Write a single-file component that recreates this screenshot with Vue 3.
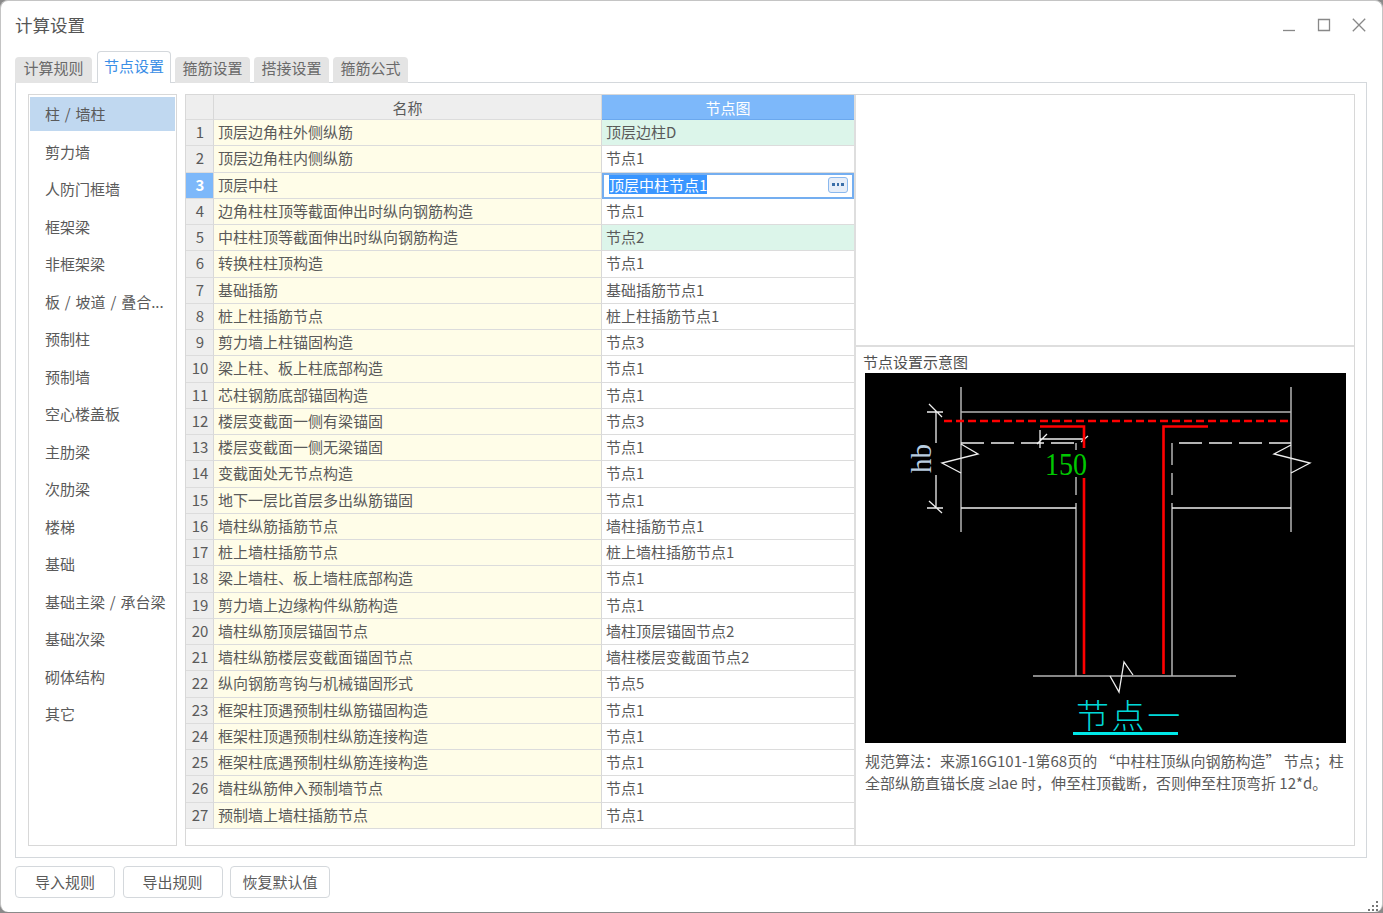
<template>
  <div class="window">
    <div class="titlebar">
      <span class="win-title">计算设置</span>
      <div class="win-btns">
        <svg width="14" height="14" viewBox="0 0 14 14"><path d="M1 12.5h12" /></svg>
        <svg width="14" height="14" viewBox="0 0 14 14"><path d="M1.5 1.5h11v11h-11z" /></svg>
        <svg width="14" height="14" viewBox="0 0 14 14"><path d="M.8.8l12.4 12.4M13.2.8L.8 13.2" /></svg>
      </div>
    </div>

    <div class="tabs">
      <div v-for="(t, i) in tabs" :key="t" class="tab" :class="{ active: i === 1 }">{{ t }}</div>
    </div>

    <div class="panel">
      <div class="sidebar">
        <div v-for="(s, i) in sideItems" :key="s" class="side-item" :class="{ active: i === 0 }">{{ s }}</div>
      </div>

      <div class="grid-wrap">
        <div class="table">
          <div class="row head">
            <div class="cell num"></div>
            <div class="cell title">名称</div>
            <div class="cell title node-head">节点图</div>
          </div>
          <div v-for="(r, i) in rows" :key="r[0]" class="row">
            <div class="cell num" :class="{ current: i === 2 }">{{ i + 1 }}</div>
            <div class="cell name">{{ r[0] }}</div>
            <div v-if="i === 2" class="cell editing">
              <span class="sel">{{ r[1] }}</span>
              <span class="more"><i></i><i></i><i></i></span>
            </div>
            <div v-else class="cell node" :class="{ changed: i === 0 || i === 4 }">{{ r[1] }}</div>
          </div>
        </div>

        <div class="side-pane">
          <div class="blank"></div>
          <div class="preview">
            <div class="preview-label">节点设置示意图</div>
            <svg class="drawing" width="481" height="370" viewBox="865 373 481 370">
              <rect x="865" y="373" width="481" height="370" fill="#000" />
              <g fill="none" stroke="#b4b4b4" stroke-width="1.5">
                <path d="M961 387V532M1291 387V532M961 412H1291" />
                <path d="M1076 443V450M1076 477V495M1172 443V465M1172 473V495" />
                <path d="M1076 503V676M1172 503V676M1033 676H1236" />
              </g>
              <g fill="none" stroke="#eee" stroke-width="1.3">
                <path d="M961 443H1076M1179 443H1291" stroke-dasharray="23 7" />
                <path d="M961 508H1076M1172 508H1291" />
                <path d="M936 412V443M936 475V508M927 412H943M929 404L942 417M927 508H943M929 501L942 513" />
                <path d="M1040 439H1085M1040 430V448M1047 434L1037 444M1088 436L1081 442" />
                <path d="M961 444L978 454L942 463L961 473M1291 445L1274 454L1310 463L1291 473" />
                <path d="M1110 676L1119 692L1124 662L1133 675" />
              </g>
              <g fill="none" stroke="#f00">
                <path d="M944 421H1291" stroke-width="2.6" stroke-dasharray="8 4" />
                <path d="M1040 426.5H1084V448M1084 478V674M1208 426.5H1163.5V674" stroke-width="2.6" />
              </g>
              <text x="1045" y="475" class="dim" fill="#00c800" textLength="42" lengthAdjust="spacingAndGlyphs">150</text>
              <text x="931" y="473" class="dim hb" fill="#b8cde0" transform="rotate(-90 931 473)">hb</text>
              <text x="1076" y="728" class="node-name" fill="#00d8d8">节点一</text>
              <rect x="1073" y="732" width="105" height="3" fill="#00e8e8" />
            </svg>
            <p class="note">规范算法：来源16G101-1第68页的 “中柱柱顶纵向钢筋构造” 节点；柱<br />全部纵筋直锚长度 <span class="ge">≥</span>lae 时，伸至柱顶截断，否则伸至柱顶弯折 12*d。</p>
          </div>
        </div>
      </div>
    </div>

    <div class="footer">
      <button class="btn">导入规则</button>
      <button class="btn">导出规则</button>
      <button class="btn">恢复默认值</button>
    </div>

    <svg class="grip" width="12" height="12" viewBox="0 0 12 12" fill="#777">
      <rect x="9" y="1" width="2" height="2" />
      <rect x="5" y="5" width="2" height="2" />
      <rect x="9" y="5" width="2" height="2" />
      <rect x="1" y="9" width="2" height="2" />
      <rect x="5" y="9" width="2" height="2" />
      <rect x="9" y="9" width="2" height="2" />
    </svg>
  </div>
</template>

<script setup>
const tabs = ['计算规则', '节点设置', '箍筋设置', '搭接设置', '箍筋公式']

const sideItems = [
  '柱 / 墙柱', '剪力墙', '人防门框墙', '框架梁', '非框架梁', '板 / 坡道 / 叠合...',
  '预制柱', '预制墙', '空心楼盖板', '主肋梁', '次肋梁', '楼梯', '基础',
  '基础主梁 / 承台梁', '基础次梁', '砌体结构', '其它'
]

const rows = [
  ['顶层边角柱外侧纵筋', '顶层边柱D'],
  ['顶层边角柱内侧纵筋', '节点1'],
  ['顶层中柱', '顶层中柱节点1'],
  ['边角柱柱顶等截面伸出时纵向钢筋构造', '节点1'],
  ['中柱柱顶等截面伸出时纵向钢筋构造', '节点2'],
  ['转换柱柱顶构造', '节点1'],
  ['基础插筋', '基础插筋节点1'],
  ['桩上柱插筋节点', '桩上柱插筋节点1'],
  ['剪力墙上柱锚固构造', '节点3'],
  ['梁上柱、板上柱底部构造', '节点1'],
  ['芯柱钢筋底部锚固构造', '节点1'],
  ['楼层变截面一侧有梁锚固', '节点3'],
  ['楼层变截面一侧无梁锚固', '节点1'],
  ['变截面处无节点构造', '节点1'],
  ['地下一层比首层多出纵筋锚固', '节点1'],
  ['墙柱纵筋插筋节点', '墙柱插筋节点1'],
  ['桩上墙柱插筋节点', '桩上墙柱插筋节点1'],
  ['梁上墙柱、板上墙柱底部构造', '节点1'],
  ['剪力墙上边缘构件纵筋构造', '节点1'],
  ['墙柱纵筋顶层锚固节点', '墙柱顶层锚固节点2'],
  ['墙柱纵筋楼层变截面锚固节点', '墙柱楼层变截面节点2'],
  ['纵向钢筋弯钩与机械锚固形式', '节点5'],
  ['框架柱顶遇预制柱纵筋锚固构造', '节点1'],
  ['框架柱顶遇预制柱纵筋连接构造', '节点1'],
  ['框架柱底遇预制柱纵筋连接构造', '节点1'],
  ['墙柱纵筋伸入预制墙节点', '节点1'],
  ['预制墙上墙柱插筋节点', '节点1']
]
</script>

<style>
html, body { margin: 0; background: #8a8a8a; overflow: hidden; }
</style>

<style scoped>
.window {
  position: relative;
  box-sizing: border-box;
  width: 1383px;
  height: 912px;
  background: #fff;
  border-radius: 8px;
  border: 1px solid #c4c4c4;
  border-bottom: 0;
  font-family: "Noto Sans CJK SC", "Liberation Sans", sans-serif;
  font-size: 15px;
  color: #5a5a5a;
}

.titlebar {
  box-sizing: border-box;
  display: flex;
  align-items: center;
  justify-content: space-between;
  height: 51px;
  padding: 0 16px 4px 14px;
}
.win-title { font-size: 17.5px; color: #555; }
.win-btns { display: flex; gap: 21px; }
.win-btns svg { fill: none; stroke: #888; stroke-width: 1.3; }

.tabs {
  display: flex;
  align-items: flex-end;
  gap: 4px;
  height: 31px;
  margin: 0 14px -1px;
  position: relative;
  z-index: 1;
}
.tab {
  width: 75px;
  height: 26px;
  line-height: 22px;
  text-align: center;
  background: #e4e4e4;
  border-radius: 4px 4px 0 0;
  color: #6a6a6a;
}
.tab:first-child { width: 77px; }
.tab.active {
  width: 72px;
  height: 31px;
  line-height: 28px;
  margin-left: 1px;
  background: #fff;
  border: 1px solid #d4d8dc;
  border-bottom: 0;
  color: #3a8ee6;
}

.panel {
  box-sizing: border-box;
  display: flex;
  gap: 8px;
  height: 776px;
  margin: 0 15px 0 14px;
  padding: 11px 11px 11px 12px;
  border: 1px solid #d4d8dc;
}

.sidebar {
  box-sizing: border-box;
  width: 149px;
  padding: 2px 1px;
  border: 1px solid #d8d8d8;
}
.side-item {
  height: 34px;
  line-height: 34px;
  margin-bottom: 3.5px;
  padding-left: 15px;
  white-space: nowrap;
  word-spacing: 1.5px;
}
.side-item.active { background: #c0d8f0; }

.grid-wrap {
  box-sizing: border-box;
  display: flex;
  width: 1170px;
  border: 1px solid #d8d8d8;
}

.table { width: 668px; flex: none; }
.row {
  display: grid;
  grid-template-columns: 28px 388px 252px;
  height: 26.25px;
}
.row.head { height: 25px; }
.cell {
  box-sizing: border-box;
  border-right: 1px solid #d8d8d8;
  border-bottom: 1px solid #dcdcdc;
  line-height: 24px;
  white-space: nowrap;
  overflow: hidden;
}
.num { background: #eee; text-align: center; padding-left: 1px; }
.num.current { background: #7db8fa; color: #fff; font-weight: 700; }
.title { background: #eee; text-align: center; line-height: 25px; }
.node-head { background: #7db8fa; color: #fff; border-right: 0; border-bottom-color: #6ba8ee; }
.name { background: #fffde8; padding-left: 4px; }
.node { padding-left: 4px; border-right: 0; }
.node.changed { background: #dcf5ea; }
.editing {
  display: flex;
  align-items: center;
  justify-content: space-between;
  padding: 0 4px 2px 5px;
  border: 2px solid #74aef0;
}
.sel { background: #3a96ff; color: #fff; line-height: 19px; }
.more {
  box-sizing: border-box;
  display: flex;
  align-items: center;
  justify-content: center;
  gap: 2px;
  width: 20px;
  height: 16px;
  background: #e6edf8;
  border: 1.5px solid #8ab8ee;
  border-radius: 3px;
}
.more i { width: 2.5px; height: 2.5px; background: #3a6ea8; }

.side-pane {
  flex: 1;
  display: flex;
  flex-direction: column;
  border-left: 2px solid #dedede;
}
.blank { height: 250px; border-bottom: 2px solid #dedede; }
.preview { padding: 4px 0 0 9px; }
.preview-label { height: 22px; line-height: 22px; margin-left: -2px; color: #505050; }
.drawing { display: block; }
.dim { font-family: "Liberation Serif", serif; font-size: 31px; }
.hb { font-size: 29px; }
.node-name {
  font-family: "Noto Sans CJK SC", sans-serif;
  font-size: 33px;
  font-weight: 300;
  letter-spacing: 2.6px;
}
.note {
  margin: 7px 0 0;
  font-size: 15px;
  line-height: 22px;
  white-space: nowrap;
}
.ge { font-family: "Liberation Sans", sans-serif; }

.footer {
  display: flex;
  gap: 7.5px;
  margin: 8px 0 0 14px;
}
.btn {
  width: 100px;
  height: 32px;
  padding: 0 0 2px;
  background: #fff;
  border: 1px solid #d4d8dc;
  border-radius: 4px;
  font: inherit;
  color: #5a5a5a;
}

.grip { position: absolute; right: 3px; bottom: 0; }
</style>
